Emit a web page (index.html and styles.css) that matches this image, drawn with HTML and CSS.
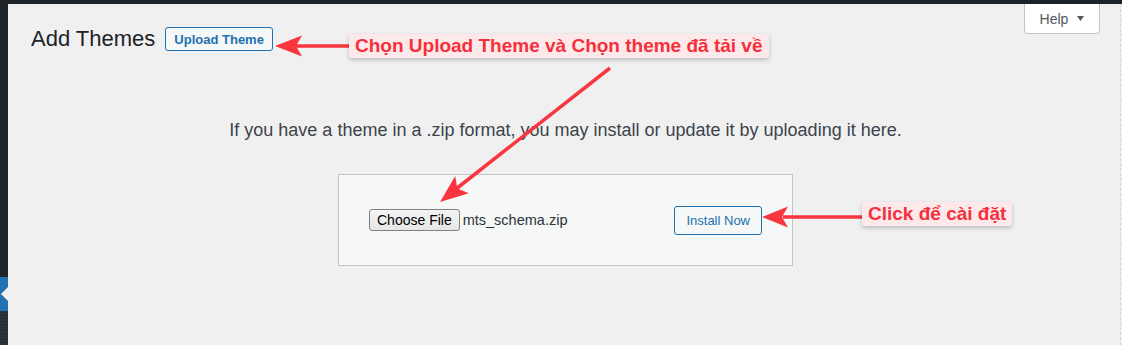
FILE: index.html
```html
<!DOCTYPE html>
<html lang="en">
<head>
    <meta charset="UTF-8">
    <meta name="viewport" content="width=device-width, initial-scale=1.0">
    <title>Add Themes</title>
    <link rel="stylesheet" href="styles.css">
</head>
<body>

    <div class="adminbar"></div>

    <div class="layout">
        <!-- trozo visible del menu lateral -->
        <aside class="adminmenu">
            <div class="menu-top"></div>
            <div class="menu-current"><span class="notch"></span></div>
            <div class="menu-rest"></div>
        </aside>

        <main class="content">
            <div class="wrap">
                <div class="head-row">
                    <div class="title-group">
                        <h1>Add Themes</h1>
                        <button class="title-action">Upload Theme</button>
                    </div>
                    <button class="help-tab">Help
                        <svg width="7" height="5" viewBox="0 0 7 5"><path d="M0 0h7L3.5 5z" fill="#50575e"/></svg>
                    </button>
                </div>

                <div class="upload-theme">
                    <p class="install-help">If you have a theme in a .zip format, you may install or update it by uploading it here.</p>
                    <form class="upload-form">
                        <div class="file-field">
                            <button type="button" class="file-btn">Choose File</button>
                            <span class="file-name">mts_schema.zip</span>
                        </div>
                        <button type="button" class="install-btn">Install Now</button>
                    </form>
                </div>
            </div>
        </main>
    </div>

    <!-- anotaciones encima de la captura -->
    <svg class="annotations" width="1122" height="345" viewBox="0 0 1122 345">
        <g fill="#f7363f" stroke="#f7363f">
            <line x1="296" y1="46" x2="350" y2="46" stroke-width="3.5"/>
            <path d="M275 46L302 35.5L296 46L302 56.5z" stroke="none"/>

            <line x1="456" y1="189" x2="610" y2="68" stroke-width="3.5"/>
            <path d="M440 202L455.2 176L457.3 188.4L468.8 193.3z" stroke="none"/>

            <line x1="783" y1="217" x2="863" y2="217" stroke-width="3.5"/>
            <path d="M762 217L788 206.5L782 217L788 227.5z" stroke="none"/>
        </g>
    </svg>
    <div class="callout callout-upload">Chọn Upload Theme và Chọn theme đã tải về</div>
    <div class="callout callout-install">Click để cài đặt</div>

</body>
</html>
```

FILE: styles.css
```css
html, body {
    height: 100%;
}
body {
    margin: 0;
    overflow: hidden;
    background: #f0f0f1;
    font-family: "Liberation Sans", Arial, sans-serif;
    color: #1d2327;
    position: relative;
}
.adminbar {
    height: 4px;
    background: #1d2327;
}
.layout {
    display: flex;
    height: calc(100% - 4px);
}
.adminmenu {
    width: 8px;
    display: flex;
    flex-direction: column;
}
.menu-top {
    height: 273px;
    background: #1d2327;
}
.menu-current {
    height: 34px;
    background: #2271b1;
    display: flex;
    align-items: center;
    justify-content: flex-end;
}
.notch {
    width: 0;
    height: 0;
    border-top: 7px solid transparent;
    border-bottom: 7px solid transparent;
    border-right: 7px solid #f0f0f1;
}
.menu-rest {
    flex: 1;
    background-color: #2c3338;
    background-image: radial-gradient(#1d2327 0.8px, transparent 1px);
    background-size: 3px 3px;
}
.content {
    flex: 1;
    border-right: 1px dashed #d8d8da;
    margin-right: 1px;
}
.wrap {
    padding: 0 20px 0 23px;
}
.head-row {
    display: flex;
    justify-content: space-between;
    align-items: flex-start;
}
.title-group {
    display: flex;
    align-items: center;
    gap: 10px;
    margin-top: 23px;
}
h1 {
    margin: 0;
    font-size: 22px;
    line-height: 24px;
    font-weight: 400;
}
.title-action {
    height: 24px;
    padding: 0 8px;
    border: 1px solid #2271b1;
    border-radius: 3px;
    background: #f6f7f7;
    color: #2271b1;
    font-family: inherit;
    font-size: 13px;
    font-weight: bold;
}
.help-tab {
    height: 30px;
    width: 76px;
    display: flex;
    align-items: center;
    justify-content: center;
    gap: 9px;
    border: 1px solid #c3c4c7;
    border-top: none;
    border-radius: 0 0 4px 4px;
    background: #fff;
    color: #50575e;
    font-family: inherit;
    font-size: 14px;
}
.install-help {
    margin: 66px 0 0;
    text-align: center;
    font-size: 18px;
    line-height: 27px;
    color: #3c434a;
}
.upload-form {
    box-sizing: border-box;
    width: 455px;
    height: 92px;
    margin: 30px auto 0;
    padding: 0 30px;
    display: flex;
    align-items: center;
    justify-content: space-between;
    background: #f6f7f7;
    border: 1px solid #c3c4c7;
}
.file-field {
    display: flex;
    align-items: center;
    gap: 3px;
}
.file-btn {
    height: 22px;
    padding: 0 7px;
    border: 1px solid #808080;
    border-radius: 3px;
    background: linear-gradient(#f4f4f4, #e6e6e6);
    color: #000;
    font-family: inherit;
    font-size: 14px;
}
.file-name {
    font-size: 14.5px;
    color: #2c3338;
}
.install-btn {
    height: 29px;
    padding: 0 11px;
    border: 1px solid #2271b1;
    border-radius: 3px;
    background: #f6f7f7;
    color: #2271b1;
    font-family: inherit;
    font-size: 13px;
}
.annotations {
    position: absolute;
    top: 0;
    left: 0;
    pointer-events: none;
}
.callout {
    position: absolute;
    box-sizing: border-box;
    height: 24px;
    padding: 0 6px;
    line-height: 24px;
    background: #fde9ea;
    color: #f5303c;
    font-size: 19px;
    font-weight: bold;
    white-space: nowrap;
    border-radius: 2px;
    box-shadow: 0 2px 4px rgba(0, 0, 0, 0.22);
}
.callout-upload {
    left: 349px;
    top: 34px;
}
.callout-install {
    left: 862px;
    top: 202px;
}
```
